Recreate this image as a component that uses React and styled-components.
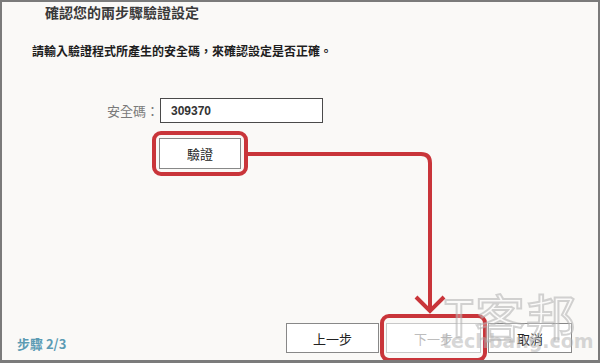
import React from "react"
import styled, { createGlobalStyle } from "styled-components"

const GlobalStyle = createGlobalStyle`
  html, body {
    margin: 0;
    padding: 0;
    background: #ffffff;
  }
`

const Colors = {
  border: "#7b7b7b",
  page: "#faf9f7",
  text: "#2a2a2a",
  label: "#7a7a7a",
  red: "#c9353a",
  step: "#5b9bb4",
}

const Dialog = styled.div`
  position: relative;
  width: 600px;
  height: 363px;
  box-sizing: border-box;
  border: 2px solid ${Colors.border};
  border-bottom-width: 3px;
  background: ${Colors.page};
  display: flex;
  flex-direction: column;
  overflow: hidden;
  font-family: "Noto Sans CJK TC", "Liberation Sans", sans-serif;
  color: ${Colors.text};
`

const Title = styled.h2`
  margin: 0;
  padding: 1px 0 0 43px;
  font-size: 14px;
  font-weight: 700;
  line-height: 18px;
  color: #3a3a3a;
`

const Instruction = styled.p`
  margin: 22px 0 0 30px;
  font-size: 12px;
  font-weight: 700;
  line-height: 16px;
  color: #1e1e1e;
`

const FormRow = styled.div`
  display: flex;
  align-items: center;
  margin-top: 39px;
  padding-left: 105px;
`

const Label = styled.label`
  width: 53px;
  font-size: 13px;
  color: ${Colors.label};
`

const CodeInput = styled.div`
  width: 163px;
  height: 25px;
  box-sizing: border-box;
  border: 1px solid #4a4a4a;
  background: #ffffff;
  padding-left: 10px;
  display: flex;
  align-items: center;
  font-size: 12px;
  font-weight: 700;
  font-family: "Liberation Sans", sans-serif;
  color: #333;
`

const VerifyRow = styled.div`
  display: flex;
  margin-top: 15px;
  padding-left: 157px;
`

const Highlight = styled.span`
  position: relative;
  display: inline-flex;

  &::before {
    content: "";
    position: absolute;
    top: ${(p) => p.$v}px;
    bottom: ${(p) => p.$v}px;
    left: ${(p) => p.$h}px;
    right: ${(p) => p.$h}px;
    border: 4px solid ${Colors.red};
    border-radius: 9px;
    pointer-events: none;
  }
`

const Button = styled.button`
  width: ${(p) => p.$w}px;
  height: ${(p) => p.$h || 30}px;
  box-sizing: border-box;
  padding: 0;
  background: #ffffff;
  border: 1px solid ${(p) => (p.disabled ? "#c8c8c8" : "#888")};
  color: ${(p) => (p.disabled ? "#bdbdbd" : "#222")};
  font-family: "Noto Sans CJK TC", sans-serif;
  font-size: 13px;
`

const Spacer = styled.div`
  flex: 1;
`

const Footer = styled.div`
  display: flex;
  align-items: center;
  padding: 0 26px 7px 15px;
`

const StepText = styled.span`
  margin-top: 10px;
  font-size: 13px;
  font-weight: 700;
  color: ${Colors.step};
`

const Buttons = styled.div`
  margin-left: auto;
  display: flex;
  gap: 7px;
`

const Arrow = styled.svg`
  position: absolute;
  top: -2px;
  left: -2px;
  pointer-events: none;
`

const Watermark = styled.div`
  position: absolute;
  z-index: 1;
  left: 440px;
  top: 287px;
  display: flex;
  flex-direction: column;
  align-items: flex-start;
  pointer-events: none;
  font-family: "Noto Sans CJK TC", "DejaVu Sans", sans-serif;
`

const MarkBig = styled.span`
  margin-left: 2px;
  font-size: 50px;
  line-height: 52px;
  font-weight: 400;
  letter-spacing: 1px;
  color: rgba(255, 255, 255, 0.25);
  -webkit-text-stroke: 2px rgba(175, 175, 175, 0.55);
`

const MarkSmall = styled.span`
  margin-top: -11px;
  font-size: 19px;
  line-height: 22px;
  font-weight: 700;
  font-family: "DejaVu Sans", sans-serif;
  color: rgba(175, 175, 175, 0.5);
`

export default function App() {
  return (
    <>
      <GlobalStyle />
      <Dialog>
        <Title>確認您的兩步驟驗證設定</Title>
        <Instruction>請輸入驗證程式所產生的安全碼，來確認設定是否正確。</Instruction>
        <FormRow>
          <Label>安全碼：</Label>
          <CodeInput>309370</CodeInput>
        </FormRow>
        <VerifyRow>
          <Highlight $v={-7} $h={-7}>
            <Button $w={82} $h={31}>驗證</Button>
          </Highlight>
        </VerifyRow>
        <Spacer />
        <Footer>
          <StepText>步驟 2/3</StepText>
          <Buttons>
            <Button $w={93}>上一步</Button>
            <Highlight $v={-9} $h={-6}>
              <Button $w={95} disabled>下一步</Button>
            </Highlight>
            <Button $w={84}>取消</Button>
          </Buttons>
        </Footer>
        <Watermark>
          <MarkBig>T客邦</MarkBig>
          <MarkSmall>techbang.com</MarkSmall>
        </Watermark>
        <Arrow width="600" height="363" viewBox="0 0 600 363">
          <path
            d="M246 154 H421 Q430 154 430 163 V311"
            fill="none"
            stroke={Colors.red}
            strokeWidth="4"
          />
          <polyline
            points="416,297 430,311 444,297"
            fill="none"
            stroke={Colors.red}
            strokeWidth="4"
          />
        </Arrow>
      </Dialog>
    </>
  )
}
